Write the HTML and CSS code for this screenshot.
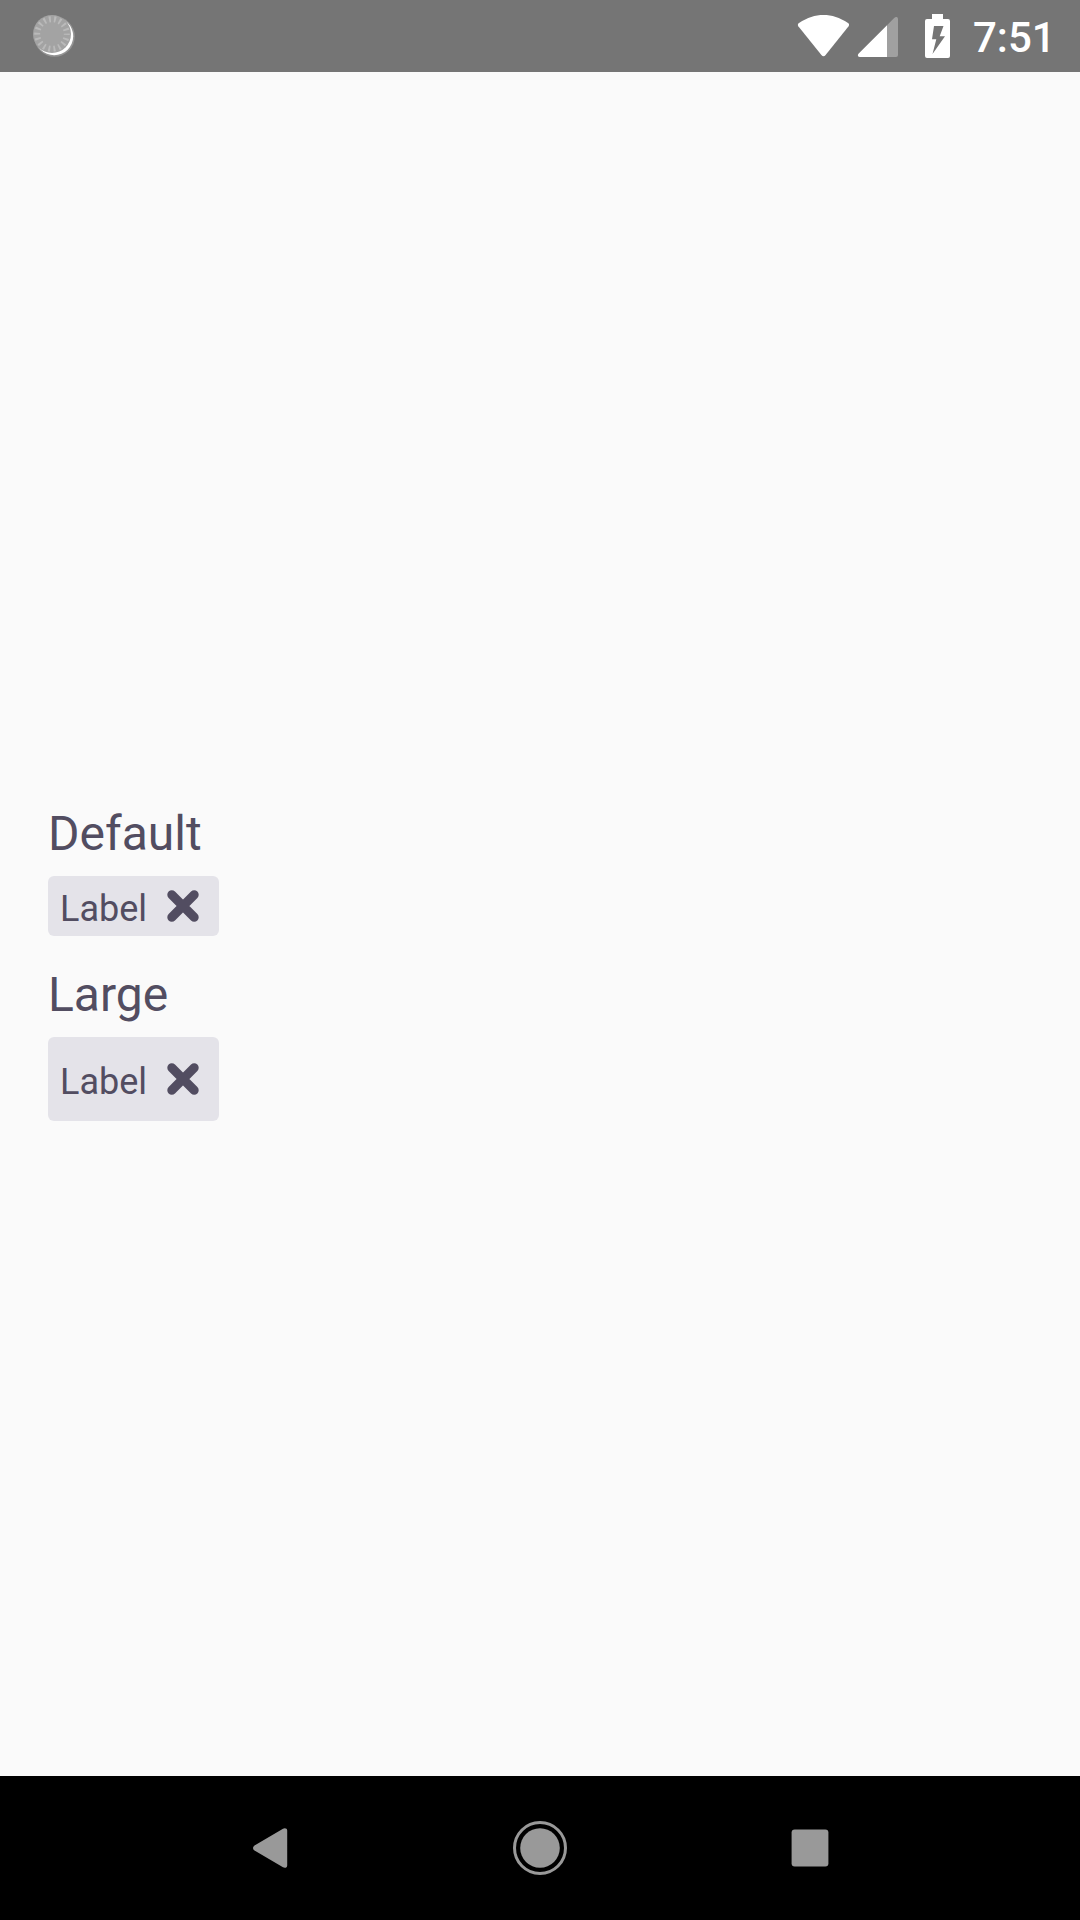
FILE: index.html
```html
<!DOCTYPE html>
<html lang="en">
<head>
<meta charset="utf-8">
<title>Tags</title>
<link rel="stylesheet" href="styles.css">
</head>
<body>
<header class="status-bar">
  <svg class="sync" width="48" height="48" viewBox="28 10 48 48">
    <defs><filter id="soft" x="-20%" y="-20%" width="140%" height="140%"><feGaussianBlur stdDeviation="0.7"/></filter></defs>
    <circle cx="54.500" cy="36.500" r="20.300" fill="#aaa" opacity=".6" filter="url(#soft)"/>
    <circle cx="54.200" cy="36.200" r="19" fill="#fff" filter="url(#soft)"/>
    <circle cx="52" cy="34" r="19" fill="#a3a3a3"/>
    <circle cx="52" cy="34" r="14.800" fill="none" stroke="#bababa" stroke-width="6" stroke-dasharray="1.900 3.266" stroke-dashoffset=".95"/>
  </svg>
  <div class="status-icons">
    <svg class="wifi" width="52" height="44" viewBox="797 13 52 44">
      <path d="M798.3 25.2C797.5 24 797.8 22.8 799 22C807.5 16.600 815 14 823.500 14C832 14 839.500 16.600 848 22C849.200 22.800 849.400 24 848.600 25.200L825.600 54Q823.500 56.500 821.400 54Z" fill="#fff"/>
    </svg>
    <svg class="signal" width="42" height="42" viewBox="857 16 42 42">
      <path d="M887 25.200L894.200 17.900Q895.500 16.700 896.800 17.100Q898 17.500 898 19V55Q898 57 896 57H887Z" fill="#a0a0a0"/>
      <path d="M887 25.200V57H860Q858.200 57 857.900 55.700Q857.700 54.500 858.700 53.500Z" fill="#fff"/>
    </svg>
    <svg class="battery" width="25" height="44" viewBox="925 14 25 44">
      <path fill-rule="evenodd" d="M932 14H943V19H948Q950 19 950 21V56Q950 58 948 58H927Q925 58 925 56V21Q925 19 927 19H932ZM934 26L932 39.300H936.300L932.500 54L945 36.200H939.700L943.500 26Z" fill="#fff"/>
    </svg>
    <span class="clock">7:51</span>
  </div>
</header>
<main class="content">
  <h2 class="heading">Default</h2>
  <div class="tag">
    <span class="tag-label">Label</span>
    <svg class="tag-close" width="48" height="48" viewBox="0 0 48 48"><path d="M12.800 12.800L35.200 35.200M35.200 12.800L12.800 35.200"/></svg>
  </div>
  <h2 class="heading heading-next">Large</h2>
  <div class="tag tag-large">
    <span class="tag-label">Label</span>
    <svg class="tag-close" width="48" height="48" viewBox="0 0 48 48"><path d="M12.800 12.800L35.200 35.200M35.200 12.800L12.800 35.200"/></svg>
  </div>
</main>
<nav class="nav-bar">
  <svg width="54" height="54" viewBox="-27 -27 54 54"><path d="M-15.500 -2.500L13 -19.300Q15 -20.300 16.500 -19.200Q17.200 -18.700 17.200 -17.500V17.500Q17.200 18.700 16.500 19.200Q15 20.300 13 19.300L-15.500 2.500Q-17 1.500 -17 0Q-17 -1.500 -15.500 -2.500Z"/></svg>
  <svg width="54" height="54" viewBox="-27 -27 54 54"><circle r="19.800"/><circle class="ring" r="25.500"/></svg>
  <svg width="54" height="54" viewBox="-27 -27 54 54"><rect x="-18.400" y="-18.400" width="36.800" height="36.800" rx="3"/></svg>
</nav>
</body>
</html>
```
FILE: styles.css
```css
body {
  margin: 0;
  height: 1920px;
  display: flex;
  flex-direction: column;
  background: #fafafa;
  color: #524d61;
  font-family: Roboto, "Liberation Sans", sans-serif;
}

svg {
  display: block;
  flex: none;
}

.status-bar {
  height: 72px;
  box-sizing: border-box;
  padding: 10px 31px 0 28px;
  display: flex;
  justify-content: space-between;
  align-items: flex-start;
  background: #757575;
  color: #fff;
}

.status-icons {
  display: flex;
  align-items: flex-start;
}

.wifi {
  margin: 4px 8px 0 0;
}

.signal {
  margin: 6px 26px 0 0;
}

.battery {
  margin: 4px 23px 0 0;
}

.clock {
  width: 76px;
  font-size: 42px;
  font-weight: 500;
  line-height: 56px;
  white-space: nowrap;
}

.content {
  flex: 1;
  padding: 730px 48px 0;
  display: flex;
  flex-direction: column;
  align-items: flex-start;
}

.heading {
  margin: 0 0 10px;
  font-size: 48px;
  font-weight: 400;
  line-height: 64px;
}

.heading-next {
  margin-top: 27px;
}

.tag {
  box-sizing: border-box;
  width: 171px;
  height: 60px;
  padding: 0 12px;
  display: flex;
  align-items: center;
  justify-content: space-between;
  border-radius: 6px;
  background: #e4e3e9;
}

.tag-large {
  height: 84px;
}

.tag-label {
  padding-top: 6px;
  font-size: 36px;
  line-height: 42px;
}

.tag-close path {
  fill: none;
  stroke: #524d61;
  stroke-width: 9;
  stroke-linecap: round;
}

.nav-bar {
  height: 144px;
  padding: 0 135px;
  display: grid;
  grid-template-columns: repeat(3, 1fr);
  place-items: center;
  background: #000;
  fill: #999;
}

.nav-bar .ring {
  fill: none;
  stroke: #999;
  stroke-width: 3;
}
```
